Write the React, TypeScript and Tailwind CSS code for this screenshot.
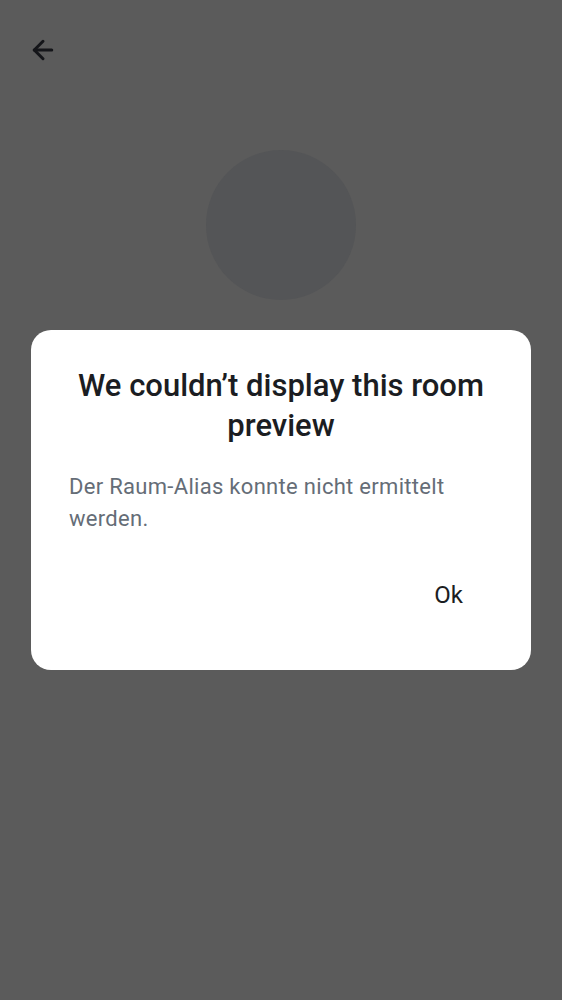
import { ArrowLeft } from "lucide-react";

export default function App() {
  return (
    <div className="relative w-[562px] h-[1000px] overflow-hidden bg-[#5b5b5b] font-['Roboto',sans-serif]">
      {/* Screen behind the scrim */}
      <div className="flex flex-col">
        <div className="h-[100px] flex items-center px-[28px] pb-[1px]">
          <ArrowLeft className="w-[30px] h-[30px] text-[#141519]" strokeWidth={2.4} />
        </div>
        <div className="flex justify-center pt-[50px]">
          <div className="w-[150px] h-[150px] rounded-full bg-[#545557]" />
        </div>
      </div>

      {/* Dialog */}
      <div className="absolute left-[31px] top-[330px] w-[500px] h-[340px] rounded-[20px] bg-white flex flex-col px-[38px] pt-[36px]">
        <h2 className="text-center text-[31px] leading-[40px] text-[#1b1d22] font-medium -mx-[10px]">
          We couldn’t display this room preview
        </h2>
        <p className="mt-[25px] text-[22px] leading-[32px] text-[#656d77] tracking-[0.3px] pr-[10px]">
          Der Raum-Alias konnte nicht ermittelt werden.
        </p>
        <div className="flex justify-end mt-[44px] pr-[30px]">
          <span className="text-[24px] leading-[32px] text-[#1b1d22]">Ok</span>
        </div>
      </div>
    </div>
  );
}
